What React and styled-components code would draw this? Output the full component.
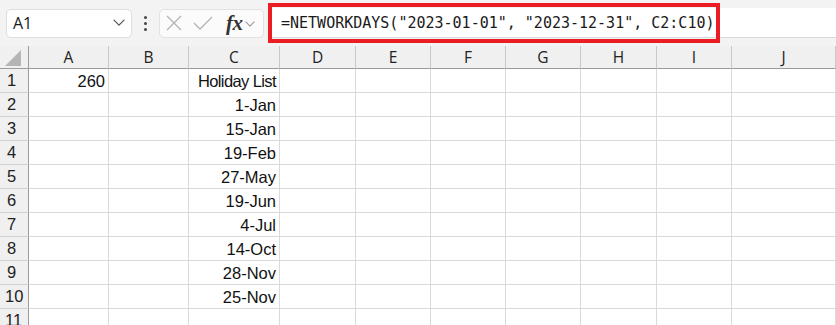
import React from "react";
import styled, { createGlobalStyle } from "styled-components";

const Global = createGlobalStyle`
  html, body { margin: 0; padding: 0; background: #ffffff; overflow: hidden; }
  #root { width: 836px; height: 325px; overflow: hidden; }
`;

const Page = styled.div`
  width: 836px;
  height: 325px;
  display: flex;
  flex-direction: column;
  background: #ffffff;
  font-family: "Liberation Sans", Arial, sans-serif;
`;

const Toolbar = styled.div`
  height: 46px;
  flex: none;
  display: flex;
  align-items: center;
  padding-left: 6px;
  background: #f3f3f3;
  box-sizing: border-box;
`;

const NameBox = styled.div`
  width: 126px;
  height: 29px;
  box-sizing: border-box;
  background: #ffffff;
  border: 1px solid #dedede;
  border-radius: 5px;
  display: flex;
  align-items: center;
  justify-content: space-between;
  padding: 0 6px 0 6px;
  font-family: "Open Sans", "Noto Sans", sans-serif;
  font-size: 16px;
  color: #1a1a1a;
`;

const Dots = styled.div`
  width: 27px;
  display: flex;
  flex-direction: column;
  align-items: center;
  gap: 3px;
  span {
    width: 3px;
    height: 3px;
    border-radius: 50%;
    background: #444;
  }
`;

const FxBox = styled.div`
  width: 105px;
  height: 29px;
  box-sizing: border-box;
  background: #fbfbfb;
  border: 1px solid #e2e2e2;
  border-radius: 5px;
  display: flex;
  align-items: center;
  padding-left: 6px;
  gap: 11px;
`;

const Fx = styled.span`
  font-family: "Liberation Serif", "DejaVu Serif", serif;
  font-style: italic;
  font-weight: bold;
  font-size: 21px;
  color: #333;
  margin-left: 2px;
  line-height: 1;
  letter-spacing: -0.5px;
`;

const FxArrow = styled.span`
  display: flex;
  margin-left: -9px;
  margin-top: 2px;
`;

const FormulaWrap = styled.div`
  flex: 1;
  height: 29px;
  margin-left: 4px;
  background: #ffffff;
  position: relative;
  display: flex;
  align-items: center;
  padding-left: 13px;
  font-family: "DejaVu Sans Mono", "Liberation Mono", monospace;
  font-size: 15px;
  color: #1a1a1a;
  white-space: nowrap;
  border-bottom: 1px solid #d8d8d8;
`;

const Highlight = styled.div`
  position: absolute;
  left: 0;
  top: -5px;
  width: 452px;
  height: 40px;
  box-sizing: border-box;
  border: 4px solid #ec1c24;
  pointer-events: none;
`;

const cols = [29, 80, 80, 91, 76, 75, 75, 75, 76, 75, 104];
const letters = ["A", "B", "C", "D", "E", "F", "G", "H", "I", "J"];

const Grid = styled.div`
  display: grid;
  grid-template-columns: ${cols.map((c) => c + "px").join(" ")};
  grid-auto-rows: 24px;
  grid-template-rows: 23px;
  flex: none;
`;

const ColHead = styled.div`
  background: #f0f0f0;
  box-sizing: border-box;
  border-bottom: 1px solid #9b9b9b;
  border-right: 1px solid ${(p) => (p.$corner ? "#9b9b9b" : "#c8c8c8")};
  display: flex;
  align-items: center;
  justify-content: center;
  font-family: "Open Sans", "Noto Sans", sans-serif;
  font-size: 15.5px;
  color: #222;
`;

const Corner = styled.div`
  width: 0;
  height: 0;
  border-left: 16px solid transparent;
  border-bottom: 16px solid #b5b5b5;
  margin-left: -3px;
  margin-top: 2px;
`;

const RowHead = styled.div`
  background: #f0f0f0;
  box-sizing: border-box;
  border-bottom: 1px solid #d2d2d2;
  border-right: 1px solid #9b9b9b;
  display: flex;
  align-items: center;
  padding-left: ${(p) => (p.$wide ? 5 : 7)}px;
  font-size: 16.5px;
  color: #222;
`;

const Cell = styled.div`
  box-sizing: border-box;
  border-bottom: 1px solid #dadada;
  border-right: 1px solid #dadada;
  display: flex;
  align-items: center;
  justify-content: flex-end;
  padding-right: 3px;
  padding-top: 1px;
  font-size: 16.5px;
  color: #111;
  white-space: nowrap;
  letter-spacing: ${(p) => (p.$tight ? "-0.6px" : "0")};
`;

const data = {
  1: { A: "260", C: "Holiday List" },
  2: { C: "1-Jan" },
  3: { C: "15-Jan" },
  4: { C: "19-Feb" },
  5: { C: "27-May" },
  6: { C: "19-Jun" },
  7: { C: "4-Jul" },
  8: { C: "14-Oct" },
  9: { C: "28-Nov" },
  10: { C: "25-Nov" },
};

const Chevron = ({ size = 12, color = "#444" }) => (
  <svg width={size} height={size * 0.6} viewBox="0 0 12 7" fill="none">
    <path d="M1 1l5 5 5-5" stroke={color} strokeWidth="1.3" strokeLinecap="round" strokeLinejoin="round" />
  </svg>
);

const Cross = () => (
  <svg width="16" height="16" viewBox="0 0 16 16" fill="none">
    <path d="M1 1l14 14M15 1L1 15" stroke="#b3b3b3" strokeWidth="1.3" />
  </svg>
);

const Check = () => (
  <svg width="20" height="14" viewBox="0 0 20 14" fill="none">
    <path d="M1 7l6 6L19 1" stroke="#b3b3b3" strokeWidth="1.3" />
  </svg>
);

export default function App() {
  const rows = [1, 2, 3, 4, 5, 6, 7, 8, 9, 10, 11];
  return (
    <Page>
      <Global />
      <Toolbar>
        <NameBox>
          <span>A1</span>
          <Chevron size={12} color="#555" />
        </NameBox>
        <Dots>
          <span />
          <span />
          <span />
        </Dots>
        <FxBox>
          <Cross />
          <Check />
          <Fx>fx</Fx>
          <FxArrow>
            <Chevron size={10} color="#999" />
          </FxArrow>
        </FxBox>
        <FormulaWrap>
          =NETWORKDAYS("2023-01-01", "2023-12-31", C2:C10)
          <Highlight />
        </FormulaWrap>
      </Toolbar>
      <Grid>
        <ColHead $corner>
          <Corner />
        </ColHead>
        {letters.map((l) => (
          <ColHead key={l}>{l}</ColHead>
        ))}
        {rows.map((r) => (
          <React.Fragment key={r}>
            <RowHead $wide={r >= 10}>{r}</RowHead>
            {letters.map((l) => (
              <Cell key={l} $tight={r === 1 && l === "C"}>
                {data[r] && data[r][l]}
              </Cell>
            ))}
          </React.Fragment>
        ))}
      </Grid>
    </Page>
  );
}
